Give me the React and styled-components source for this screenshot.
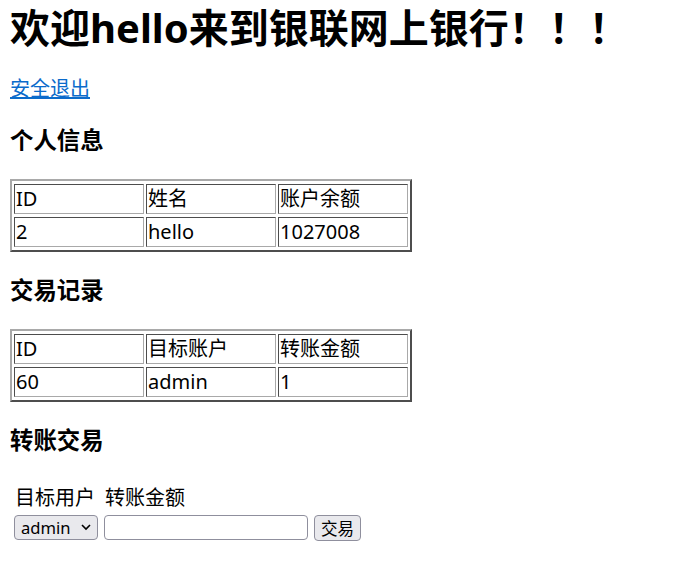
import React from "react";
import styled, { createGlobalStyle } from "styled-components";

const GlobalStyle = createGlobalStyle`
  body {
    margin: 0 10px;
    background: #fff;
    color: #000;
    font-family: "Noto Sans", "Noto Sans CJK SC", sans-serif;
    font-size: 20px;
  }
`;

const Title = styled.h1`
  margin: 0 0 24px;
  padding-top: 4px;
  font-size: 40px;
  line-height: 48px;
  font-weight: 700;
`;

const Para = styled.p`
  margin: 0;
  line-height: 26px;
`;

const Logout = styled.a`
  color: #0b6bcb;
  text-decoration: underline;
  cursor: pointer;
`;

const Section = styled.h3`
  margin: 23px 0 23px;
  font-size: 23.4px;
  line-height: 31px;
  font-weight: 700;
`;

const Table = styled.table`
  width: 402px;
  table-layout: fixed;
  border-collapse: separate;
  border-spacing: 2px 3px;
  border-style: solid;
  border-width: 2px;
  border-color: #a9a9a9 #4d4d4d #4d4d4d #a9a9a9;
`;

const Cell = styled.td`
  padding: 1px;
  line-height: 26px;
  text-align: left;
  font-weight: 400;
  border-style: solid;
  border-width: 1px;
  border-color: #4d4d4d #a9a9a9 #a9a9a9 #4d4d4d;
  white-space: nowrap;
  overflow: hidden;
`;

const TransferForm = styled.form`
  margin: 29px 0 0 4px;
  display: grid;
  grid-template-columns: 84px 204px auto;
  column-gap: 6px;
  row-gap: 4px;
  align-items: start;
  justify-content: start;
`;

const FieldLabel = styled.span`
  line-height: 26px;
  padding-left: 1px;
`;

const SelectWrap = styled.div`
  position: relative;
  width: 84px;
  height: 25px;
`;

const Select = styled.select`
  appearance: none;
  display: block;
  width: 100%;
  height: 100%;
  box-sizing: border-box;
  margin: 0;
  padding: 0 0 2px 6px;
  background: #e9e9ed;
  border: 1px solid #8f8f9d;
  border-radius: 4px;
  font-family: "Noto Sans", "Noto Sans CJK SC", sans-serif;
  font-size: 16.6px;
  color: #000;
`;

const Chevron = styled.svg`
  position: absolute;
  right: 7px;
  top: 9px;
  pointer-events: none;
`;

const AmountInput = styled.input`
  display: block;
  width: 204px;
  height: 25px;
  box-sizing: border-box;
  margin: 0;
  padding: 0 4px;
  border: 1px solid #8f8f9d;
  border-radius: 4px;
  background: #fff;
  font-size: 16.6px;
`;

const SubmitButton = styled.button`
  display: block;
  height: 26px;
  box-sizing: border-box;
  margin: 0;
  padding: 0 6px;
  background: #e9e9ed;
  border: 1px solid #8f8f9d;
  border-radius: 4px;
  font-family: "Noto Sans CJK SC", sans-serif;
  font-size: 16.6px;
  line-height: 22px;
  color: #000;
`;

const info = { id: 2, name: "hello", balance: 1027008 };
const records = [{ id: 60, target: "admin", amount: 1 }];

function DataTable({ head, rows }) {
  return (
    <Table>
      <tbody>
        <tr>
          {head.map((h) => (
            <Cell key={h}>{h}</Cell>
          ))}
        </tr>
        {rows.map((r, i) => (
          <tr key={i}>
            {r.map((v, j) => (
              <Cell key={j}>{v}</Cell>
            ))}
          </tr>
        ))}
      </tbody>
    </Table>
  );
}

export default function App() {
  return (
    <>
      <GlobalStyle />
      <Title>欢迎hello来到银联网上银行！！！</Title>
      <Para>
        <Logout>安全退出</Logout>
      </Para>

      <Section>个人信息</Section>
      <DataTable
        head={["ID", "姓名", "账户余额"]}
        rows={[[info.id, info.name, info.balance]]}
      />

      <Section>交易记录</Section>
      <DataTable
        head={["ID", "目标账户", "转账金额"]}
        rows={records.map((r) => [r.id, r.target, r.amount])}
      />

      <Section>转账交易</Section>
      <TransferForm onSubmit={(e) => e.preventDefault()}>
        <FieldLabel>目标用户</FieldLabel>
        <FieldLabel>转账金额</FieldLabel>
        <span />
        <SelectWrap>
          <Select defaultValue="admin">
            <option value="admin">admin</option>
          </Select>
          <Chevron width="10" height="7" viewBox="0 0 10 7">
            <polyline
              points="1,1 5,5 9,1"
              fill="none"
              stroke="#000"
              strokeWidth="1.6"
            />
          </Chevron>
        </SelectWrap>
        <AmountInput type="text" />
        <SubmitButton type="submit">交易</SubmitButton>
      </TransferForm>
    </>
  );
}
